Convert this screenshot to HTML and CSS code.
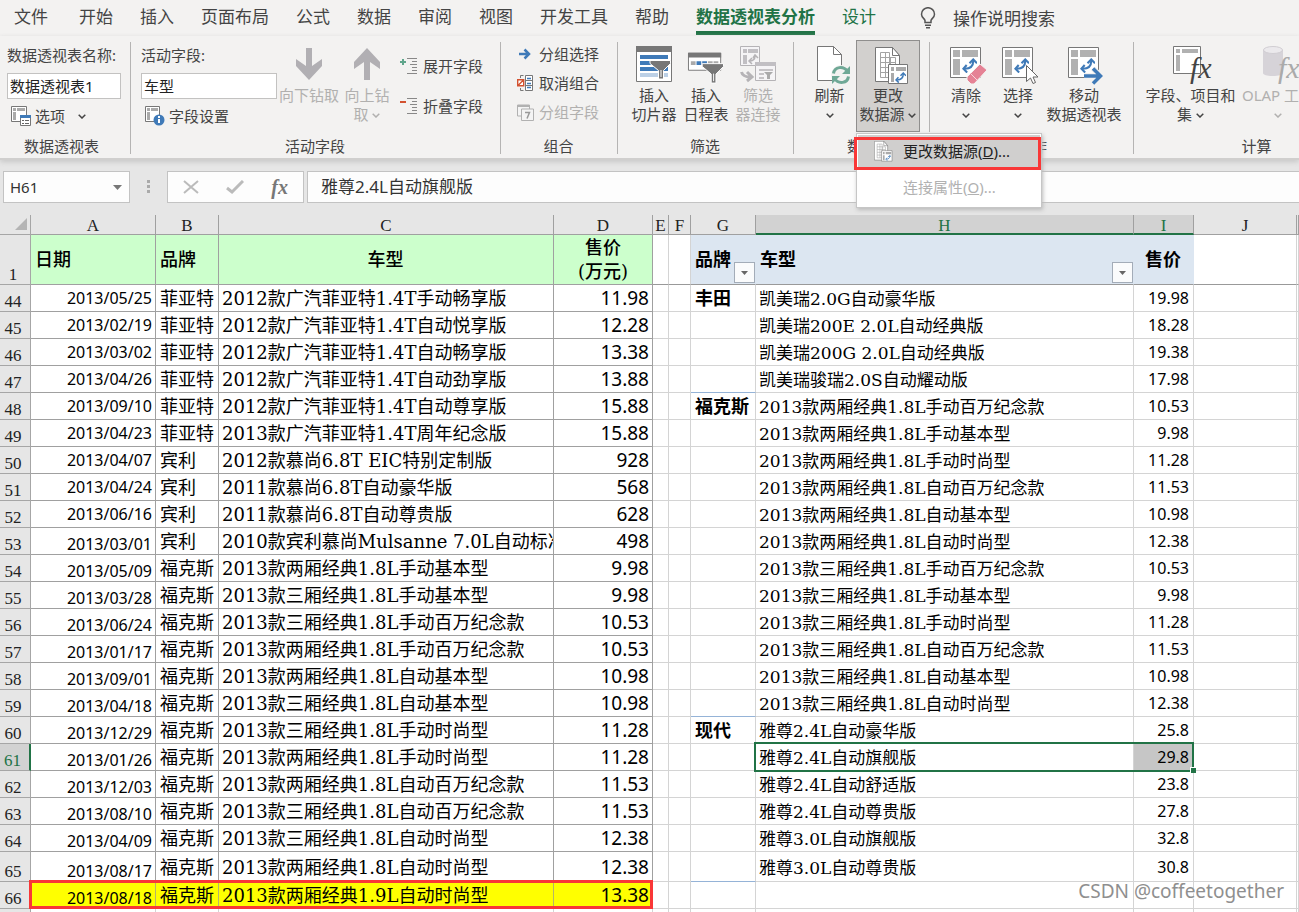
FILE: index.html
```html
<!DOCTYPE html>
<html lang="zh-CN">
<head>
<meta charset="utf-8">
<title>数据透视表</title>
<link rel="stylesheet" href="styles.css">
</head>
<body>
<svg class="sprite" aria-hidden="true">
  <symbol id="chev" viewBox="0 0 8 5"><path d="M.7.7 4 4 7.3.7" fill="none" stroke="currentColor" stroke-width="1.5"/></symbol>
  <symbol id="swap" viewBox="0 0 16 16"><path d="M3 11.500C9 11.500 12 9 12 3" fill="none" stroke="#3f7ab8" stroke-width="2.200"/><path d="M8 5.500 12 1.500l4 4M5 7.500 1.500 11.500 5.500 15.500" fill="none" stroke="#3f7ab8" stroke-width="2.200"/></symbol>
  <symbol id="pivot" viewBox="0 0 31 31"><path d="M.5.5h30v30H.5z" fill="#fff" stroke="#777"/><path d="M3 3h7v7H3zM12 3h16v7H12zM3 12h7v16H3z" fill="#b1b1b1"/><use href="#swap" x="12" y="11" width="15" height="15"/></symbol>
  <symbol id="source" viewBox="0 0 34 38"><path d="M.5.5h17l7 8v26H.5z" fill="#fff" stroke="#777"/><path d="M17.500.5v8h7z" fill="#fff" stroke="#777"/><path d="M5.500 5.500h9v25h-9zM5.500 10.500h15v20M5.500 15.500h15M5.500 20.500h9M5.500 25.500h9M10.500 5.500v25M15.500 10.500v7" fill="none" stroke="#a4a4a4"/><path d="M13.500 17.500h19v19h-19z" fill="#fff" stroke="#777"/><path d="M16 20h3v4h-3zM21 20h10v4H21zM16 26h3v9h-3z" fill="#aaa"/><use href="#swap" x="20" y="25" width="11" height="11"/></symbol>
</svg>

<nav class="tabs">
  <a href="#">文件</a><a href="#">开始</a><a href="#">插入</a><a href="#">页面布局</a><a href="#">公式</a><a href="#">数据</a><a href="#">审阅</a><a href="#">视图</a><a href="#">开发工具</a><a href="#">帮助</a><a href="#" class="active">数据透视表分析</a><a href="#" class="green">设计</a>
  <a href="#" class="tell"><svg width="16" height="22" viewBox="0 0 16 22"><path d="M5 15.500v-2C4.500 11.500 1.500 10.500 1.500 7.200a6.500 6.500 0 0 1 13 0c0 3.300-3 4.300-3.500 6.300v2zM5 18.200h6M6 20.700h4" fill="none" stroke="#555" stroke-width="1.500"/></svg>操作说明搜索</a>
</nav>

<div class="ribbon">
  <section class="group g-name">
    <div class="body stack">
      <label for="ptname">数据透视表名称:</label>
      <input id="ptname" value="数据透视表1">
      <button class="small"><svg width="20" height="20" viewBox="0 0 20 20"><path d="M.5.500h15v15H.500z" fill="#fff" stroke="#777"/><path d="M2 2h3v3H2zM6 2h8v3H6zM2 6h3v8H2z" fill="#aaa"/><path d="M9.500 9.500h10v10h-10z" fill="#fff" stroke="#777"/><path d="M9 9h11v3H9z" fill="#3f7ab8"/><path d="M11 14.500h2M14 14.500h4M11 17.500h2M14 17.500h4" stroke="#666"/></svg>选项<svg class="chev wide"><use href="#chev"/></svg></button>
    </div>
    <h2>数据透视表</h2>
  </section>
  <section class="group g-field">
    <div class="body">
      <div class="stack">
        <label for="field">活动字段:</label>
        <input id="field" value="车型">
        <button class="small"><svg width="20" height="20" viewBox="0 0 20 20"><path d="M.5.500h14v15H.500z" fill="#fff" stroke="#777"/><path d="M2 2h3v3H2zM6 2h7v3H6zM2 6h3v8H2z" fill="#aaa"/><circle cx="14" cy="14" r="5.500" fill="#3f7ab8"/><path d="M13 10h2v2h-2zM13 13h2v4h-2z" fill="#fff"/></svg>字段设置</button>
      </div>
      <button class="big off" disabled><svg class="pic" viewBox="0 0 36 40"><path d="M15 2h6v18l10-7v7L18 34 5 20v-7l10 7z" fill="#b1afb3"/></svg>向下钻取</button>
      <button class="big off" disabled><svg class="pic" viewBox="0 0 36 40"><path d="M15 34h6V16l10 7v-7L18 2 5 16v7l10-7z" fill="#b1afb3"/></svg>向上钻<br>取 <svg class="chev"><use href="#chev"/></svg></button>
      <div class="pair">
        <button class="small"><svg width="18" height="18" viewBox="0 0 18 18"><path d="M0 5h6M3 2v6" stroke="#5fa58b" stroke-width="2"/><path d="M7 1.500h10M12 4.500h5M10 7.500h7M12 10.500h5M12 13.500h5M7 16.500h10" stroke="#888"/></svg>展开字段</button>
        <button class="small"><svg width="18" height="18" viewBox="0 0 18 18"><path d="M0 5h6" stroke="#d35230" stroke-width="2"/><path d="M7 1.500h10M12 4.500h5M10 7.500h7M12 10.500h5M12 13.500h5M7 16.500h10" stroke="#888"/></svg>折叠字段</button>
      </div>
    </div>
    <h2>活动字段</h2>
  </section>
  <section class="group g-group">
    <div class="body trio">
      <button class="small"><svg width="17" height="16" viewBox="0 0 17 16"><path d="M2 8h10M7.500 3.500 12 8l-4.500 4.500" fill="none" stroke="#3f7ab8" stroke-width="2.500"/></svg>分组选择</button>
      <button class="small"><svg width="17" height="16" viewBox="0 0 17 16"><path d="M8.500.500h7v15h-7z" fill="#fff" stroke="#777"/><path d="M10 3.500h4M10 8.500h4M10 12.500h4" stroke="#3f7ab8" stroke-width="1.500"/><path d="M8 5.500h8M8 10.500h8M3.500 3V.500h3M3.500 13v2.500h3" fill="none" stroke="#777"/><path d="M.700 4.700h6v6h-6zM1 10.500l5.500-5.500" fill="#fff" stroke="#d35230" stroke-width="1.400"/></svg>取消组合</button>
      <button class="small off" disabled><svg width="17" height="17" viewBox="0 0 17 17"><path d="M.500 1h12v11H.500z" fill="#f4f4f4" stroke="#b1b1b1"/><path d="M0 2h13" stroke="#b1b1b1" stroke-width="2"/><path d="M4.500 5h12v11.500h-12z" fill="#f4f4f4" stroke="#b1b1b1"/><path d="M8 8.500h4.500L10 14.500" fill="none" stroke="#999" stroke-width="1.500"/></svg>分组字段</button>
    </div>
    <h2>组合</h2>
  </section>
  <section class="group g-filter">
    <div class="body">
      <button class="big"><svg class="pic" viewBox="0 0 36 40"><path d="M.500.500h35v35H.500z" fill="#fff" stroke="#777"/><path d="M0 0h36v6H0z" fill="#777"/><path d="M4 9h28v4H4zM4 15h28v4H4zM4 21h28v4H4z" fill="#3f7ab8"/><path d="M4 27h28v4H4z" fill="#bcd0e6"/><path d="M14 14.500h20.500v3l-7 7V33h-5v-8.500l-8.500-7z" fill="#777" stroke="#fff"/><path d="M25 24v7" stroke="#fff"/></svg>插入<br>切片器</button>
      <button class="big"><svg class="pic" viewBox="0 0 38 40"><path d="M.500 6.500h34v18H.500z" fill="#fff" stroke="#777"/><path d="M0 6h35v5H0z" fill="#777"/><path d="M3 15h5v4H3zM21 15h5v4h-5zM27 15h5v4h-5z" fill="#aaa"/><path d="M9 15h5v4H9zM15 15h5v4h-5z" fill="#3f7ab8"/><path d="M15 17.500h22.500v3l-8 8V38h-5v-9.500l-9.500-8z" fill="#777" stroke="#fff"/><path d="M27 28v8" stroke="#fff"/></svg>插入<br>日程表</button>
      <button class="big off" disabled><svg class="pic" viewBox="0 0 36 40"><g fill="#f5f4f6" stroke="#b5b3b6"><path d="M.500.500h19v19H.500z"/><path d="M15.500 16.500h20v18h-20z"/></g><path d="M3 3h4v4H3zM8 3h10v4H8zM3 9h4v9H3zM15 16h21v4H15z" fill="#c1bfc3"/><path d="M9 15c4 0 6-2 6-5M13 12l2-3 3 3M12 12l-3 3 3 3M19 24h14M19 28h5M19 32h5" fill="none" stroke="#b5b3b6" stroke-width="1.500"/><path d="M1.500 26c1 4 4 5 9 5M7 26l5 5-5 4" fill="none" stroke="#b5b3b6" stroke-width="3"/><path d="M24 26h9l-3 3v4h-3v-4z" fill="#aaa"/></svg>筛选<br>器连接</button>
    </div>
    <h2>筛选</h2>
  </section>
  <section class="group g-data">
    <div class="body">
      <button class="big"><svg class="pic" viewBox="-3 0 36 40"><path d="M2.500.500h16l8 8v26h-24z" fill="#fff" stroke="#777"/><path d="M18.500.500v8h8" fill="none" stroke="#777"/><circle cx="26" cy="29" r="10" fill="#f3f2f1"/><path d="M18.500 27.500c1-7 10-8 14-2M33.500 30.500c-1 7-10 8-14 2" fill="none" stroke="#6fa896" stroke-width="3"/><path d="M35 20v8h-8zM17 38v-8h8z" fill="#6fa896"/></svg>刷新<br><svg class="chev"><use href="#chev"/></svg></button>
      <div class="drop">
        <button class="big open" aria-expanded="true"><svg class="pic" viewBox="-5 -1 36 40"><use href="#source" width="34" height="38"/></svg>更改<br>数据源 <svg class="chev"><use href="#chev"/></svg></button>
        <div class="menu">
          <button class="hot"><svg width="19" height="21"><use href="#source"/></svg><span>更改数据源(<u>D</u>)...</span></button>
          <button disabled><span>连接属性(<u>O</u>)...</span></button>
        </div>
      </div>
    </div>
    <h2>数据</h2>
  </section>
  <section class="group g-act">
    <div class="body">
      <button class="big"><svg class="pic" viewBox="-3 0 38 40"><use href="#pivot" x="0" y="1" width="31" height="31"/><path d="M17 31 30 18l7 6-13 14h-3l-4-4z" fill="#e58295" stroke="#f3f2f1"/><path d="m20 27 7 7" stroke="#f8d5dc"/></svg>清除<br><svg class="chev"><use href="#chev"/></svg></button>
      <button class="big"><svg class="pic" viewBox="-3 0 38 40"><use href="#pivot" x="0" y="1" width="31" height="31"/><path d="M24.500 19.500v16l4-3.500 2.500 5.500 2.500-1-2.500-5.500h5z" fill="#fff" stroke="#666"/></svg>选择<br><svg class="chev"><use href="#chev"/></svg></button>
      <button class="big"><svg class="pic" viewBox="-3 0 38 40"><use href="#pivot" x="0" y="1" width="31" height="31"/><path d="M16 30h16M25 22.500l7.500 7.500-7.500 7.500" fill="none" stroke="#f3f2f1" stroke-width="6"/><path d="M16 30h16M25 22.500l7.500 7.500-7.500 7.500" fill="none" stroke="#3f7ab8" stroke-width="3.500"/></svg>移动<br>数据透视表</button>
    </div>
    <h2>操作</h2>
  </section>
  <section class="group g-calc">
    <div class="body">
      <button class="big"><svg class="pic" viewBox="-2 0 40 40"><path d="M.500.500h27v27H.500z" fill="#fff" stroke="#777"/><path d="M3 3h4v4H3zM9 3h16v4H9zM3 9h4v16H3z" fill="#b1b1b1"/><text x="17" y="32" class="fx">fx</text></svg>字段、项目和<br>集 <svg class="chev"><use href="#chev"/></svg></button>
      <button class="big off" disabled><svg class="pic" viewBox="0 0 40 40"><path d="M5 4v23c0 4 20 4 20 0V4z" fill="#d6d3d8"/><ellipse cx="15" cy="4" rx="9.500" ry="3.500" fill="#ebe9ec" stroke="#d0cdd2"/><text x="20" y="32" class="fx pale">fx</text></svg>OLAP 工具<br><svg class="chev"><use href="#chev"/></svg></button>
    </div>
    <h2>计算</h2>
  </section>
</div>

<div class="formula">
  <div class="namebox"><input aria-label="名称框" value="H61"><svg width="9" height="5" viewBox="0 0 9 5"><path d="M0 0h9L4.500 5z" fill="#777"/></svg></div>
  <svg class="grip" width="4" height="14" viewBox="0 0 4 14"><path d="M0 0h3v3H0zM0 5h3v3H0zM0 10h3v3H0z" fill="#aaa"/></svg>
  <div class="tools">
    <button aria-label="取消"><svg width="16" height="14" viewBox="0 0 16 14"><path d="m1 1 14 12M15 1 1 13" stroke="#bbb" stroke-width="2"/></svg></button>
    <button aria-label="输入"><svg width="18" height="14" viewBox="0 0 18 14"><path d="m1 8 5 4L17 1" fill="none" stroke="#bbb" stroke-width="3"/></svg></button>
    <button class="fxb">fx</button>
  </div>
  <input class="content" aria-label="编辑栏" value="雅尊2.4L自动旗舰版">
</div>

<main class="sheet">
<table>
<colgroup><col class="c0"><col class="ca"><col class="cb"><col class="cc"><col class="cd"><col class="ce"><col class="cf"><col class="cg"><col class="ch"><col class="ci"><col class="cj"><col></colgroup>
<thead>
<tr class="letters"><th><svg width="12" height="12" viewBox="0 0 12 12"><path d="M12 0v12H0z" fill="#b4b4b4"/></svg><th>A<th>B<th>C<th>D<th>E<th>F<th>G<th class="sel">H<th class="sel">I<th>J<th></tr>
<tr class="heads"><th>1<td>日期<td>品牌<td>车型<td>售价<br>(万元)<td><td><td><div class="flt">品牌<button aria-label="筛选品牌"><svg width="7" height="4" viewBox="0 0 7 4"><path d="M0 0h7L3.500 4z" fill="#666"/></svg></button></div><td><div class="flt">车型<button aria-label="筛选车型"><svg width="7" height="4" viewBox="0 0 7 4"><path d="M0 0h7L3.500 4z" fill="#666"/></svg></button></div><td>售价<td><td></tr>
</thead>
<tbody>
<tr><th>44<td>2013/05/25<td>菲亚特<td>2012款广汽菲亚特1.4T手动畅享版<td>11.98<td><td><td>丰田<td>凯美瑞2.0G自动豪华版<td>19.98<td><td></tr>
<tr><th>45<td>2013/02/19<td>菲亚特<td>2012款广汽菲亚特1.4T自动悦享版<td>12.28<td><td><td><td>凯美瑞200E 2.0L自动经典版<td>18.28<td><td></tr>
<tr><th>46<td>2013/03/02<td>菲亚特<td>2012款广汽菲亚特1.4T自动畅享版<td>13.38<td><td><td><td>凯美瑞200G 2.0L自动经典版<td>19.38<td><td></tr>
<tr class="end"><th>47<td>2013/04/26<td>菲亚特<td>2012款广汽菲亚特1.4T自动劲享版<td>13.88<td><td><td><td>凯美瑞骏瑞2.0S自动耀动版<td>17.98<td><td></tr>
<tr><th>48<td>2013/09/10<td>菲亚特<td>2012款广汽菲亚特1.4T自动尊享版<td>15.88<td><td><td>福克斯<td>2013款两厢经典1.8L手动百万纪念款<td>10.53<td><td></tr>
<tr><th>49<td>2013/04/23<td>菲亚特<td>2013款广汽菲亚特1.4T周年纪念版<td>15.88<td><td><td><td>2013款两厢经典1.8L手动基本型<td>9.98<td><td></tr>
<tr><th>50<td>2013/04/07<td>宾利<td>2012款慕尚6.8T EIC特别定制版<td>928<td><td><td><td>2013款两厢经典1.8L手动时尚型<td>11.28<td><td></tr>
<tr><th>51<td>2013/04/24<td>宾利<td>2011款慕尚6.8T自动豪华版<td>568<td><td><td><td>2013款两厢经典1.8L自动百万纪念款<td>11.53<td><td></tr>
<tr><th>52<td>2013/06/16<td>宾利<td>2011款慕尚6.8T自动尊贵版<td>628<td><td><td><td>2013款两厢经典1.8L自动基本型<td>10.98<td><td></tr>
</tbody>
<tbody class="low">
<tr><th>53<td>2013/03/01<td>宾利<td>2010款宾利慕尚Mulsanne 7.0L自动标准<td>498<td><td><td><td>2013款两厢经典1.8L自动时尚型<td>12.38<td><td></tr>
<tr><th>54<td>2013/05/09<td>福克斯<td>2013款两厢经典1.8L手动基本型<td>9.98<td><td><td><td>2013款三厢经典1.8L手动百万纪念款<td>10.53<td><td></tr>
<tr><th>55<td>2013/03/28<td>福克斯<td>2013款三厢经典1.8L手动基本型<td>9.98<td><td><td><td>2013款三厢经典1.8L手动基本型<td>9.98<td><td></tr>
<tr><th>56<td>2013/06/24<td>福克斯<td>2013款三厢经典1.8L手动百万纪念款<td>10.53<td><td><td><td>2013款三厢经典1.8L手动时尚型<td>11.28<td><td></tr>
<tr><th>57<td>2013/01/17<td>福克斯<td>2013款两厢经典1.8L手动百万纪念款<td>10.53<td><td><td><td>2013款三厢经典1.8L自动百万纪念款<td>11.53<td><td></tr>
<tr><th>58<td>2013/09/01<td>福克斯<td>2013款两厢经典1.8L自动基本型<td>10.98<td><td><td><td>2013款三厢经典1.8L自动基本型<td>10.98<td><td></tr>
<tr class="end"><th>59<td>2013/04/18<td>福克斯<td>2013款三厢经典1.8L自动基本型<td>10.98<td><td><td><td>2013款三厢经典1.8L自动时尚型<td>12.38<td><td></tr>
<tr><th>60<td>2013/12/29<td>福克斯<td>2013款三厢经典1.8L手动时尚型<td>11.28<td><td><td>现代<td>雅尊2.4L自动豪华版<td>25.8<td><td></tr>
<tr class="current"><th>61<td>2013/01/26<td>福克斯<td>2013款两厢经典1.8L手动时尚型<td>11.28<td><td><td><td><div class="selection"></div>雅尊2.4L自动旗舰版<td>29.8<td><td></tr>
<tr><th>62<td>2013/12/03<td>福克斯<td>2013款两厢经典1.8L自动百万纪念款<td>11.53<td><td><td><td>雅尊2.4L自动舒适版<td>23.8<td><td></tr>
<tr><th>63<td>2013/08/10<td>福克斯<td>2013款三厢经典1.8L自动百万纪念款<td>11.53<td><td><td><td>雅尊2.4L自动尊贵版<td>27.8<td><td></tr>
<tr><th>64<td>2013/04/09<td>福克斯<td>2013款三厢经典1.8L自动时尚型<td>12.38<td><td><td><td>雅尊3.0L自动旗舰版<td>32.8<td><td></tr>
<tr class="tall end"><th>65<td>2013/08/17<td>福克斯<td>2013款两厢经典1.8L自动时尚型<td>12.38<td><td><td><td>雅尊3.0L自动尊贵版<td>30.8<td><td></tr>
<tr class="marked"><th>66<td><div class="mark"></div>2013/08/18<td>福克斯<td>2013款两厢经典1.9L自动时尚型<td>13.38<td><td><td><td><td><td><td></tr>
<tr class="blank"><th><td><td><td><td><td><td><td><td><td><td><td></tr>
</tbody>
</table>
<div class="watermark">CSDN @coffeetogether</div>
</main>
</body>
</html>
```
FILE: styles.css
```css
*, *::before, *::after { box-sizing: border-box; }
html, body { height: 100%; }
body {
  margin: 0;
  display: flex;
  flex-direction: column;
  overflow: hidden;
  background: #e6e6e6;
  color: #444;
  font: 15px/19px "Noto Sans", "Noto Sans CJK SC", sans-serif;
}
button, input { font: inherit; color: inherit; margin: 0; }
button { border: 0; padding: 0; background: none; }
a { color: inherit; text-decoration: none; }
h2 { margin: 0; font-size: 15px; font-weight: 400; line-height: 20px; text-align: center; white-space: nowrap; }
.sprite { position: absolute; width: 0; height: 0; }

/* Tabs */
.tabs {
  display: flex;
  gap: 27px;
  padding-left: 14px;
  height: 36px;
  flex: none;
  background: #f3f2f1;
  font-size: 17px;
  line-height: 31px;
  white-space: nowrap;
}
.tabs a { height: 35px; padding-top: 1px; }
.tabs a:first-child { margin-right: 4px; }
.tabs .active { color: #217346; font-weight: 700; border-bottom: 4px solid #217346; }
.tabs .green { color: #217346; }
.tabs .tell { display: flex; align-items: center; gap: 17px; margin-left: 17px; }

/* Ribbon */
.ribbon {
  display: flex;
  flex: none;
  padding-top: 4px;
  background: #f3f2f1;
  border-bottom: 2px solid #d0cfce;
  box-shadow: 0 2px 5px #c8c8c8;
  position: relative;
  z-index: 2;
}
.group { flex: none; display: flex; flex-direction: column; gap: 4px; padding-bottom: 2px; position: relative; }
.group:not(:last-child)::after { content: ""; position: absolute; right: 0; top: 2px; bottom: 4px; width: 1px; background: #b5b4b3; }
.body { height: 92px; display: flex; align-items: flex-start; }
.g-name { width: 131px; }
.g-name h2 { padding-right: 8px; }
.g-field { width: 370px; }
.g-field h2 { padding-right: 2px; }
.g-group { width: 117px; }
.g-group h2 { padding-right: 2px; }
.g-filter { width: 176px; }
.g-filter h2 { padding-right: 2px; }
.g-data { width: 136px; z-index: 3; }
.g-data:not(:last-child)::after { bottom: 26px; }
.g-act { width: 204px; }
.g-calc { flex: 1 0 160px; min-width: 0; overflow: hidden; }
.g-calc h2 { width: 245px; }

.stack { display: flex; flex-direction: column; align-items: flex-start; padding: 6px 0 0 7px; }
.g-field .stack { padding-left: 10px; width: 146px; }
.stack label { white-space: nowrap; height: 27px; }
.stack input { width: 114px; height: 26px; padding: 0 2px 2px; border: 1px solid #c3c2c1; background: #fff; color: #222; }
.g-field .stack input { width: 136px; }
.stack .small { margin: 7px 0 0 4px; }
.small { display: flex; align-items: center; gap: 5px; height: 20px; white-space: nowrap; }
.stack .small { gap: 4px; }
.chev { width: 8px; height: 5px; vertical-align: middle; }
.chev.wide { margin-left: 9px; }
.big { display: block; padding: 6px 0 0; text-align: center; white-space: nowrap; line-height: 19px; }
.pic { display: block; width: 36px; height: 40px; margin: 0 auto; overflow: visible; }
.off { color: #b1b0af; }
.g-field .big { width: 64px; }
.g-field .big + .big { width: 52px; }
.pair { display: flex; flex-direction: column; gap: 20px; padding: 16px 0 0 7px; }
.trio { flex-direction: column; gap: 9px; padding: 4px 0 0 16px; }
.g-filter .body { padding-left: 10px; }
.g-filter .big { width: 52px; }
.g-data .body { padding-left: 9px; }
.g-data .big { width: 53px; }
.g-data .big.open { width: 64px; height: 92px; padding: 5px 0 7px; border: 1px solid #8f8e8d; background: #d2d0ce; }
.g-act .body { padding-left: 10px; }
.g-act .big { width: 52px; }
.g-act .big:last-child { width: 80px; }
.g-act .pic { width: 38px; }
.g-calc .body { padding-left: 8px; }
.g-calc .big { flex: none; width: 97px; }
.g-calc .big:last-child { width: 78px; }
.g-calc .pic { width: 40px; }
.fx { font: italic 30px "Liberation Serif", serif; fill: #444; }
.fx.pale { fill: #aaa; }

.drop { position: relative; }
.menu {
  position: absolute;
  left: 0;
  top: 93px;
  width: 186px;
  padding: 1px;
  border: 1px solid #c6c6c6;
  background: #fff;
  box-shadow: 1px 2px 4px #bbb;
}
.menu button { display: flex; align-items: center; gap: 10px; width: 100%; height: 38px; padding-left: 45px; color: #b1b1b1; text-align: left; white-space: nowrap; }
.menu .hot { height: 33px; background: #d0cfce; color: #222; padding-left: 16px; }
.menu .hot::after { content: ""; position: absolute; left: -3px; right: 0; top: 3px; height: 33px; border: 3px solid #f93737; }

/* Formula bar */
.formula { display: flex; flex: none; align-items: center; padding: 11px 0 12px 3px; color: #333; }
.namebox, .tools { display: flex; align-items: center; height: 32px; background: #fdfdfd; border: 1px solid #c3c3c3; }
.namebox { width: 127px; padding: 0 7px 0 6px; justify-content: space-between; }
.namebox input { width: 90px; border: 0; padding: 0; background: none; }
.grip { margin: 0 16px 0 17px; }
.tools { width: 137px; padding: 0 15px; justify-content: space-between; margin-right: 3px; }
.tools button { display: flex; }
.tools .fxb { font: italic 700 20px/22px "Liberation Serif", serif; color: #777; }
.content { flex: 1; min-width: 0; height: 32px; border: 1px solid #c3c3c3; border-right: 0; padding: 0 13px 3px; background: #fdfdfd; font-size: 17px; }

/* Sheet */
.sheet { flex: 1; min-height: 0; overflow: hidden; position: relative; }
table { width: 100%; table-layout: fixed; border-collapse: separate; border-spacing: 0; background: #fff; color: #000; }
.c0 { width: 31px; }
.ca { width: 125px; }
.cb { width: 63px; }
.cc { width: 335px; }
.cd { width: 99px; }
.ce { width: 16px; }
.cf { width: 22px; }
.cg { width: 65px; }
.ch { width: 378px; }
.ci { width: 60px; }
.cj { width: 103px; }
th, td {
  height: 27px;
  padding: 0 4px 0 3px;
  border: solid #d4d4d4;
  border-width: 0 1px 1px 0;
  line-height: 22px;
  text-align: left;
  white-space: nowrap;
  overflow: hidden;
}
th { background: #e6e6e6; font: 17px/18px "Liberation Serif", serif; color: #222; text-align: center; }
tr > th:first-child { border-color: #a6a6a6; vertical-align: bottom; padding: 0 4px 0 0; }
.letters th { height: 20px; padding: 3px 0 0; line-height: 16px; border-color: #a0a0a0; }
.letters th:first-child { line-height: 12px; text-align: right; padding: 0 3px 3px 0; }
.letters .sel { background: #d2d2d2; color: #217346; border-bottom: 2px solid #217346; padding: 3px 0 0; line-height: 15px; }
td:nth-child(2) { font-size: 16px; text-align: right; padding-right: 3px; }
td:nth-child(3), td:nth-child(4), td:nth-child(8) { font: 18px/22px "DejaVu Serif", "Noto Sans CJK SC", serif; padding-top: 2px; }
td:nth-child(3), td:nth-child(8) { padding-left: 4px; }
td:nth-child(8) { font-weight: 700; }
td:nth-child(9) { font: 17px/22px "DejaVu Serif", "Noto Sans CJK SC", serif; padding-top: 2px; }
td:nth-child(5) { font-size: 19px; text-align: right; padding-right: 3px; }
td:nth-child(10) { font-size: 16px; text-align: right; padding-right: 4px; }
td:nth-child(-n+5) { border-color: #a0a0a0; }
.low td:nth-child(2) { vertical-align: bottom; line-height: 20px; }
.end td:nth-child(8) { border-bottom-color: #95b3d7; }
.tall > * { height: 30px; }
.heads > * { height: 50px; border-bottom-color: #999; }
.heads td:nth-child(n) { font: 500 18px/24px "DejaVu Serif", "Noto Sans CJK SC", serif; padding-top: 1px; padding-bottom: 0; }
.heads td:nth-child(-n+5) { background: #cfc; text-align: center; }
.heads td:nth-child(2), .heads td:nth-child(3) { text-align: left; padding-left: 4px; }
.heads td:nth-child(8), .heads td:nth-child(9), .heads td:nth-child(10) { background: #dce6f1; border-right-color: #dce6f1; font-weight: 700; text-align: left; border-bottom-color: #999; }
.heads td:nth-child(8), .heads td:nth-child(9) { padding: 0 0 0 4px; }
.heads td:nth-child(10) { text-align: center; }
.flt { display: flex; align-items: center; justify-content: space-between; height: 49px; }
.flt button { align-self: flex-end; flex: none; display: flex; align-items: center; justify-content: center; width: 21px; height: 21px; margin-bottom: 1px; border: 1px solid #a3acb8; background: #fafbfc; }

.current > th:first-child { background: #d2d2d2; color: #217346; border-right: 2px solid #217346; }
.current td:nth-child(9) { position: relative; overflow: visible; }
.current td:nth-child(10) { background: #c6c6c6; }
.selection { position: absolute; left: -2px; right: -61px; top: -2px; bottom: -2px; border: 2px solid #217346; z-index: 1; }
.selection::after { content: ""; position: absolute; right: -4px; bottom: -3px; width: 6px; height: 6px; background: #217346; border: solid #fff; border-width: 1px 0 0 1px; }
.marked td:nth-child(-n+5) { background: #ff0; border-right-color: #b5b56a; }
.marked td:nth-child(2) { position: relative; overflow: visible; }
.mark { position: absolute; left: -2px; top: -2px; width: 624px; height: 29px; border: 3px solid #f93737; z-index: 1; }
.blank td:nth-child(n) { border-color: #d4d4d4; }
.watermark { position: absolute; right: 15px; bottom: 8px; font-size: 19px; line-height: 26px; color: #8f8f8f; text-shadow: 1px 1px 0 #fff; }
```
